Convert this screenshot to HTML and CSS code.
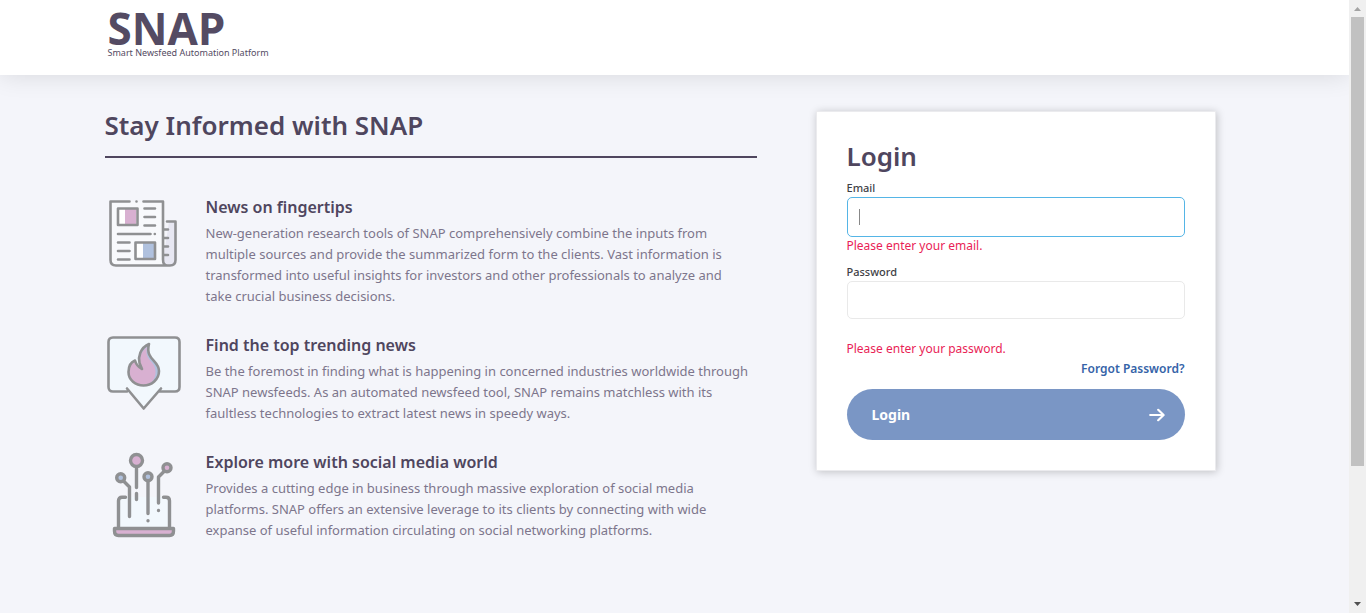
FILE: index.html
```html
<!DOCTYPE html>
<html lang="en">
<head>
<meta charset="utf-8">
<meta name="viewport" content="width=device-width, initial-scale=1">
<title>SNAP</title>
<link rel="stylesheet" href="styles.css">
</head>
<body>
<div class="page">
  <header class="site-header">
    <div class="container">
      <a class="logo" href="#">
        <span class="logo-name">SNAP</span>
        <span class="logo-tagline">Smart Newsfeed Automation Platform</span>
      </a>
    </div>
  </header>
  <main class="container content">
    <section class="intro">
      <h1>Stay Informed with SNAP</h1>
      <article class="feature">
        <svg class="feature-icon" width="78" height="88" viewBox="0 0 78 88" aria-hidden="true">
          <path class="tint-grey" d="M64 26.500h6.500v39q0 5-5 5.500l-8-1z"/>
          <path class="paper" d="M5.500 6.500h53V65q0 4 4 5.500H11q-5.500 0-5.500-5.500z"/>
          <path class="pink" d="M20 14h11v15H20z"/>
          <path class="blue" d="M38 48h12v15H38z"/>
          <path class="white" d="M14 14h6v15h-6zM31 48h7v15h-7z"/>
          <path class="line" d="M24.500 6.500h-19V65q0 5.500 5.500 5.500h54q5.500 0 5.500-5.500V26.500H62M38.500 6.500h19.500V64.500q0 6 4.500 6M31.500 6.500h.01M13 13.500h19.500v16.500H13zM30.500 47.500H50v16.500H30.500zM39.500 13.500h10.500M39.500 22h10.500M39.500 30.500h10.500M13 39h32.500M49.800 39h.01M13 47.500h11.500M13 56h11.500M13 64.500h11.500M58 34.500h5M58 43h5M58 51.500h5M58 60h5"/>
        </svg>
        <div>
          <h2>News on fingertips</h2>
          <p>New-generation research tools of SNAP comprehensively combine the inputs from<br>multiple sources and provide the summarized form to the clients. Vast information is<br>transformed into useful insights for investors and other professionals to analyze and<br>take crucial business decisions.</p>
        </div>
      </article>
      <article class="feature">
        <svg class="feature-icon" width="78" height="88" viewBox="0 0 78 88" aria-hidden="true">
          <path class="pale" d="M8 4.500h62q4.500 0 4.500 4.500v45q0 4.500-4.500 4.500H55L38.700 75.500 22 58.500H8Q3.500 58.500 3.500 54V9Q3.500 4.500 8 4.500z"/>
          <path class="line" d="M22 58.500H8Q3.500 58.500 3.500 54V9Q3.500 4.500 8 4.500h62q4.500 0 4.500 4.500v45q0 4.500-4.500 4.500H55M22 55.500l16.700 20L56 55.500"/>
          <path class="blue" d="M44 11c-9 4-11 13-9.500 19l2 5.500c-4-2-5.500-5-6.500-8-5 2-6.500 7-6.500 11.500 0 8 7 13.500 15 13.500s15.500-6 15.500-14.500C54 27 40 27 44 11z"/>
          <path class="pink" d="M42 14c-7 6-7.500 11-7 18l2 4c-4-2-6-5-7-8-4 2-6 7-6 11 0 8 6 13 14 13 8 0 13-6 12.500-14C50 27 39 28 42 14z"/>
          <path class="line" d="M44 11c-9 4-11 13-9.500 19l2.500 6c-4-2-6-5-7-8.500-5 2-6.500 7-6.500 11.500 0 8 7 13.500 15 13.500s15.500-6 15.500-14.500C54 27 40 27 44 11z"/>
        </svg>
        <div>
          <h2>Find the top trending news</h2>
          <p>Be the foremost in finding what is happening in concerned industries worldwide through<br>SNAP newsfeeds. As an automated newsfeed tool, SNAP remains matchless with its<br>faultless technologies to extract latest news in speedy ways.</p>
        </div>
      </article>
      <article class="feature">
        <svg class="feature-icon" width="78" height="88" viewBox="0 0 78 88" aria-hidden="true">
          <path class="pale" d="M13 47h52v31H13z"/>
          <path class="pink" d="M9.500 79h59v2q0 5-5 5h-49q-5 0-5-5z"/>
          <circle class="pink" cx="31.500" cy="10.500" r="6"/>
          <circle class="pink" cx="62" cy="17.700" r="4"/>
          <circle class="blue" cx="15.700" cy="27.700" r="4"/>
          <circle class="blue" cx="43" cy="26.700" r="4"/>
          <path class="line thick" d="M20.500 47.300H17q-3.500 0-3.500 3.500V78M58.500 47.300H61q3.500 0 3.500 3.500V78M9.500 78.500h59V81q0 4.500-4 4.500h-51q-4 0-4-4.500zM31.500 17v20.500M31.500 43.500v6M43 32v31.500M43 70.700h.01M19 31.500l5.500 5.500v29.500M58.500 22l-5 5v26M53.500 60.500h.01"/>
          <g class="line thick"><circle cx="31.500" cy="10.500" r="6"/><circle cx="62" cy="17.700" r="4"/><circle cx="15.700" cy="27.700" r="4"/><circle cx="43" cy="26.700" r="4"/></g>
        </svg>
        <div>
          <h2>Explore more with social media world</h2>
          <p>Provides a cutting edge in business through massive exploration of social media<br>platforms. SNAP offers an extensive leverage to its clients by connecting with wide<br>expanse of useful information circulating on social networking platforms.</p>
        </div>
      </article>
    </section>
    <form class="login-card" novalidate>
      <h2 class="login-title">Login</h2>
      <label for="email">Email</label>
      <div class="field">
        <input class="active" id="email" type="email" aria-describedby="email-error">
        <span class="caret" aria-hidden="true"></span>
      </div>
      <p class="error" id="email-error">Please enter your email.</p>
      <label class="password-label" for="password">Password</label>
      <div class="field">
        <input id="password" type="password" aria-describedby="password-error">
      </div>
      <p class="error password-error" id="password-error">Please enter your password.</p>
      <a class="forgot" href="#">Forgot Password?</a>
      <button class="submit" type="submit">
        <span>Login</span>
        <svg width="16" height="14" viewBox="0 0 16 14" aria-hidden="true"><path d="M1.200 7h13M9.200 1.800L14.600 7l-5.400 5.200"/></svg>
      </button>
    </form>
  </main>
</div>
<div class="scrollbar" aria-hidden="true">
  <svg width="17" height="17" viewBox="0 0 17 17"><path fill="#a3a3a3" d="M5 11h7L8.500 7z"/></svg>
  <div class="thumb"></div>
  <svg width="17" height="17" viewBox="0 0 17 17"><path fill="#505050" d="M5 6h7l-3.500 4z"/></svg>
</div>
</body>
</html>
```
FILE: styles.css
```css
* { box-sizing: border-box; }

body {
  margin: 0;
  min-height: 100vh;
  display: flex;
  background: #f4f5fa;
  color: #4f465e;
  font-family: "Noto Sans", "Open Sans", sans-serif;
}

h1, h2, p { margin: 0; }
a { text-decoration: none; }

.page { flex: 1; min-width: 0; }

.container {
  width: 100%;
  max-width: 1140px;
  margin: 0 auto;
}

.site-header {
  height: 75px;
  background: #fff;
  box-shadow: 0 0 24px rgba(0, 0, 0, 0.12);
}

.logo {
  display: inline-flex;
  flex-direction: column;
  gap: 2px;
  padding: 10px 0 0 3px;
  color: #544b63;
}

.logo-name {
  font: 700 44px/36px "Open Sans", sans-serif;
}

.logo-tagline {
  font-size: 9px;
  line-height: 10px;
}

.content {
  display: grid;
  grid-template-columns: minmax(0, 652px) minmax(0, 400px);
  gap: 59px;
  align-items: start;
  padding-top: 36px;
}

h1 {
  margin-bottom: 37px;
  padding-bottom: 17px;
  border-bottom: 2px solid #4f465e;
  font-size: 26px;
  line-height: 28px;
  font-weight: 600;
}

.feature {
  display: grid;
  grid-template-columns: 78px minmax(0, 1fr);
  column-gap: 23px;
  margin-bottom: 26px;
}

.feature-icon { height: 88px; margin-bottom: -10px; }

.feature h2 {
  margin-bottom: 4px;
  font-size: 16px;
  line-height: 24px;
  font-weight: 600;
}

.feature p {
  color: #7d768c;
  font-size: 13px;
  line-height: 21px;
  white-space: nowrap;
}

.line {
  fill: none;
  stroke: #8f9092;
  stroke-width: 2.600;
  stroke-linecap: round;
  stroke-linejoin: round;
}
.thick { stroke-width: 3.400; }
.pink { fill: #d8b0d1; }
.blue { fill: #b0c1de; }
.pale { fill: #f2f8fd; }
.paper { fill: #f8f9fc; }
.white { fill: #fff; }
.tint-grey { fill: #e7e7f2; }

.login-card {
  display: flex;
  flex-direction: column;
  padding: 30px;
  border: 1px solid #ebebee;
  background: #fff;
  box-shadow: 1px 1px 8px rgba(0, 0, 0, 0.22);
}

.login-title {
  margin-bottom: 9px;
  font-size: 26px;
  line-height: 28px;
  font-weight: 600;
}

label {
  color: #3f3f46;
  font-size: 11px;
  line-height: 18px;
  font-weight: 500;
}

.field { position: relative; display: flex; }

input {
  width: 100%;
  height: 38px;
  padding: 0 11px;
  border: 1px solid #e9e9e9;
  border-radius: 5px;
  background: #fff;
  font: inherit;
  font-size: 14px;
  outline: none;
}

input.active { height: 40px; border-color: #55b5e6; }

.caret {
  position: absolute;
  left: 12px;
  top: 12px;
  width: 1px;
  height: 16px;
  background: #888;
}

.error {
  color: #e91e56;
  font-size: 12px;
  line-height: 18px;
}

.password-label { margin-top: 8px; }
.password-error { margin-top: 21px; }

.forgot {
  align-self: flex-end;
  margin: 1px 0 10px;
  color: #3563a8;
  font-size: 12px;
  line-height: 20px;
  font-weight: 600;
}

.submit {
  display: flex;
  align-items: center;
  justify-content: space-between;
  height: 51px;
  padding: 0 20px 0 25px;
  border: 0;
  border-radius: 26px;
  background: #7a96c5;
  color: #fff;
  font: inherit;
  font-size: 14px;
  font-weight: 700;
}

.submit path {
  fill: none;
  stroke: #fff;
  stroke-width: 2.200;
  stroke-linecap: round;
  stroke-linejoin: round;
}

.scrollbar {
  position: sticky;
  top: 0;
  display: flex;
  flex-direction: column;
  width: 17px;
  height: 100vh;
  background: #f0f0f0;
}

.thumb {
  flex: 0 0 449px;
  margin: 0 2px auto;
  background: #c1c1c1;
}
```
